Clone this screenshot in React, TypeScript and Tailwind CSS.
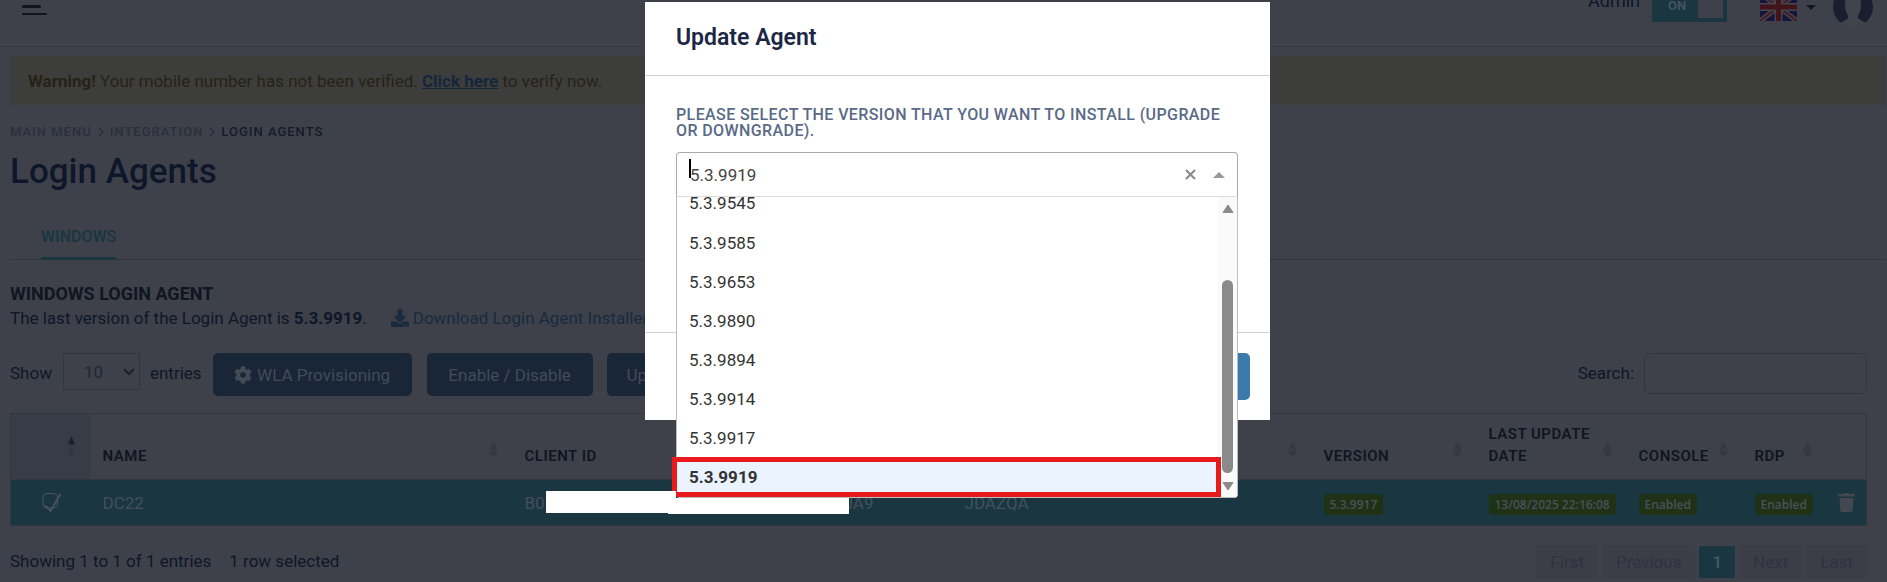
import { useState } from "react";
import { FaCog, FaDownload } from "react-icons/fa";

const versions = ["5.3.9585", "5.3.9653", "5.3.9890", "5.3.9894", "5.3.9914", "5.3.9917"];

const columns = [
  { label: "NAME", width: "w-[422px]" },
  { label: "CLIENT ID", width: "w-[440px]" },
  { label: "", width: "" },
  { label: "VERSION", width: "w-[165px]" },
  { label: "LAST UPDATE DATE", width: "w-[150px]" },
  { label: "CONSOLE", width: "w-[116px]" },
  { label: "RDP", width: "w-[84px]" },
];

const pages = ["First", "Previous", "1", "Next", "Last"];

function SortIcon() {
  return (
    <svg className="shrink-0" width="9" height="16" viewBox="0 0 9 16" fill="#353841">
      <path d="M4.5 0 9 7.500H0zM0 8.500h9L4.500 16z" />
    </svg>
  );
}

function Badge({ children }: { children: string }) {
  return (
    <span className="inline-block h-[21px] rounded bg-[#1f3216] px-[6px] align-middle font-['Open_Sans',sans-serif] text-xs leading-[21px] font-semibold whitespace-nowrap text-[#46515a]">
      {children}
    </span>
  );
}

function Flag() {
  return (
    <svg width="37" height="28" viewBox="0 0 37 28">
      <path fill="#14153a" d="M0 0h37v28H0z" />
      <path stroke="#43464e" strokeWidth="5" d="m0 0 37 28M37 0 0 28" />
      <path stroke="#491a20" strokeWidth="2" d="m0 0 37 28M37 0 0 28" />
      <path stroke="#43464e" strokeWidth="8" d="M18.500 0v28M0 14h37" />
      <path stroke="#42141a" strokeWidth="5" d="M18.500 0v28M0 14h37" />
    </svg>
  );
}

function Avatar() {
  return (
    <svg width="40" height="40" viewBox="0 0 40 40">
      <circle cx="20" cy="20" r="20" fill="#40444d" />
      <path
        fill="#191f30"
        d="M20 0A20 20 0 0 0 7.500 35.600q4-1.600 7-4.100c1-1.500.5-3-.5-5-1.500-3-2-5.500-2-9 0-6 3-9.500 8-9.500s8 3.500 8 9.500c0 3.500-.5 6-2 9-1 2-1.500 3.500-.5 5q3 2.500 7 4.100A20 20 0 0 0 20 0z"
      />
    </svg>
  );
}

function Header() {
  return (
    <header className="-mt-4 flex h-[63px] items-start justify-between border-b border-[#363941] pr-[14px] pl-[22px]">
      <button aria-label="Menu" className="flex flex-col gap-[5px] pt-[21px]">
        <span className="h-[3px] w-[19px] rounded-xs bg-[#10131d]" />
        <span className="h-[2px] w-[25px] rounded-xs bg-[#10131d]" />
      </button>
      <div className="flex items-start">
        <span className="pt-[5px] text-[18px] leading-6">Admin</span>
        <button className="ml-3 flex h-[38px] w-[75px] items-center bg-[#193641] pr-1 pl-4 text-[13px] font-bold text-[#45535c]">
          <span className="pt-[5px]">ON</span>
          <span className="ml-auto h-[30px] w-[25px] bg-[#3e4149]" />
        </button>
        <div className="ml-[33px] flex items-center gap-[9px] pt-[9px]">
          <Flag />
          <svg width="10" height="5" viewBox="0 0 10 5" fill="#0e1629">
            <path d="M0 0h10L5 5z" />
          </svg>
        </div>
        <div className="ml-[17px] pt-[3px]">
          <Avatar />
        </div>
      </div>
    </header>
  );
}

function AgentsTable() {
  return (
    <table className="mt-[17px] w-full table-fixed border-collapse border border-[#33363f] text-left">
      <thead>
        <tr className="h-[66px] border-b border-[#33363f]">
          <th className="w-[79px] bg-[#383c46] pr-[14px]">
            <svg className="ml-auto" width="9" height="22" viewBox="0 0 9 22">
              <path fill="#1b202c" d="M4.500 0 8 8.500H1z" />
              <path fill="#33363f" d="M1 13.500h7L4.500 22z" />
            </svg>
          </th>
          {columns.map((c, i) => (
            <th key={i} className={`pr-[14px] pb-3 pl-[13px] align-bottom ${c.width}`}>
              <div className="flex items-end justify-between text-[15px] leading-[22px] font-semibold tracking-[0.5px] text-[#10151f]">
                <span>{c.label}</span>
                <span className="pb-[9px]">
                  <SortIcon />
                </span>
              </div>
            </th>
          ))}
          <th className="w-[41px]" />
        </tr>
      </thead>
      <tbody>
        <tr className="h-[46px] bg-[#193641] text-[17px] text-[#44505a]">
          <td className="pl-[31px]">
            <svg width="20" height="21" viewBox="0 0 20 21" fill="none" stroke="#4a525b">
              <rect x="1" y="1.500" width="14.500" height="14.500" rx="4" />
              <path strokeWidth="1.800" d="m3 13.500 5.500 5.500L18.500 2" />
            </svg>
          </td>
          <td className="pl-[13px]">DC22</td>
          <td className="pl-[13px]">
            <div className="flex">
              <span>B0</span>
              <span className="ml-[299px]">JA9</span>
            </div>
          </td>
          <td className="pl-[13px]">JDAZQA</td>
          <td className="pl-[13px]"><Badge>5.3.9917</Badge></td>
          <td className="pl-[13px]"><Badge>13/08/2025 22:16:08</Badge></td>
          <td className="pl-[13px]"><Badge>Enabled</Badge></td>
          <td className="pl-[13px]"><Badge>Enabled</Badge></td>
          <td className="pl-[12px]">
            <button aria-label="Delete agent" className="block">
              <svg width="17" height="19" viewBox="0 0 17 19" fill="#43474f">
                <path d="M5.500 1 6.500 0h4l1 1H16q1 0 1 1v1.500H0V2q0-1 1-1zM1.500 5h14l-.8 12.500q-.2 1.500-1.700 1.500H4q-1.500 0-1.700-1.500z" />
              </svg>
            </button>
          </td>
        </tr>
      </tbody>
    </table>
  );
}

function UpdateModal() {
  const [version, setVersion] = useState("5.3.9919");

  return (
    <div role="dialog" aria-label="Update Agent" className="absolute top-[2px] left-[645px] flex h-[418px] w-[625px] flex-col bg-white">
      <h2 className="border-b border-[#cdd1d9] px-[31px] pt-5 pb-[21px] text-[23px] leading-8 font-semibold text-[#1b2743]">
        Update Agent
      </h2>
      <div className="pt-[31px] pr-8 pl-[31px]">
        <label htmlFor="version" className="block text-[16px] leading-4 font-medium tracking-wide text-[#5a6a87]">
          PLEASE SELECT THE VERSION THAT YOU WANT TO INSTALL (UPGRADE OR DOWNGRADE).
        </label>
        <div className="relative mt-[13px] flex h-[45px] items-center rounded-t border border-[#aaa] border-b-[#ddd] pr-3 pl-[13px]">
          <span className="absolute top-[6px] left-3 h-[19px] w-[2px] bg-black" />
          <input
            id="version"
            value={version}
            onChange={(e) => setVersion(e.target.value)}
            className="min-w-0 flex-1 text-[17px] text-[#444] outline-none"
          />
          <button aria-label="Clear" className="mr-[17px]" onClick={() => setVersion("")}>
            <svg width="11" height="11" viewBox="0 0 11 11" stroke="#888" strokeWidth="2">
              <path d="m1 1 9 9M10 1l-9 9" />
            </svg>
          </button>
          <svg width="12" height="6" viewBox="0 0 12 6" fill="#999">
            <path d="M6 0l6 6H0z" />
          </svg>
        </div>
      </div>
      <div className="mt-auto flex justify-end border-t border-[#cdd1d9] px-5 py-5">
        <button aria-label="Update" className="h-[47px] w-[105px] rounded-[5px] bg-[#3a7bac]" />
      </div>

      <div className="absolute top-[195px] left-[31px] flex h-[301px] w-[562px] rounded-b border border-t-0 border-[#bbb] bg-white text-[17px] text-[#333]">
        <ul className="flex min-w-0 flex-1 flex-col">
          <li className="flex h-[26px] items-start overflow-hidden pl-3">
            <span className="-mt-[6px]">5.3.9545</span>
          </li>
          {versions.map((v) => (
            <li key={v} className="flex flex-1 items-center pl-3">{v}</li>
          ))}
          <li className="relative -mt-px -mr-[3px] -ml-[5px] flex h-10 items-center border-5 border-[#e81a1c] bg-[#ebf3ff] pl-3 font-bold">
            5.3.9919
          </li>
        </ul>
        <div className="flex w-[19px] flex-col items-center bg-[#fafafa] pt-[7px] pb-[6px]">
          <svg width="12" height="9" viewBox="0 0 12 9" fill="#8a8a8a"><path stroke="#8a8a8a" strokeLinejoin="round" d="m6 1 5 7.500H1z" /></svg>
          <div className="mt-[67px] mb-[9px] w-[11px] flex-1 rounded-full bg-[#8a8a8a]" />
          <svg width="12" height="9" viewBox="0 0 12 9" fill="#8a8a8a"><path stroke="#8a8a8a" strokeLinejoin="round" d="M1 .5h10L6 8z" /></svg>
        </div>
      </div>
    </div>
  );
}

export default function App() {
  return (
    <div className="relative min-h-screen overflow-hidden bg-[#3e4149] font-[Roboto,sans-serif] text-[17px] leading-6 text-[#0e1629]">
      <Header />
      <main className="pt-[9px] pl-[10px]">
        <div className="mr-px flex h-[49px] items-center bg-[#3d3d3c] pl-[18px] text-[#272216]">
          <p>
            <b>Warning!</b> Your mobile number has not been verified.{" "}
            <a href="#verify" className="font-bold text-[#14263b] underline">Click here</a> to verify now.
          </p>
        </div>

        <nav className="mt-[17px] flex items-center gap-[6px] text-[13px] leading-5 font-medium tracking-[1px] text-[#2b2f3c]">
          <a href="#menu">MAIN MENU</a>
          <svg width="6" height="10" viewBox="0 0 6 10" fill="none" stroke="#2b2f3c" strokeWidth="1.500"><path d="m1 1 4 4-4 4" /></svg>
          <a href="#integration">INTEGRATION</a>
          <svg width="6" height="10" viewBox="0 0 6 10" fill="none" stroke="#2b2f3c" strokeWidth="1.500"><path d="m1 1 4 4-4 4" /></svg>
          <span className="text-[#151a28]">LOGIN AGENTS</span>
        </nav>

        <h1 className="mt-[10px] text-[35px] leading-10 font-medium">Login Agents</h1>

        <div className="mt-[29px] mr-px flex border-b border-[#33363e] pl-[31px]">
          <button className="-mb-px border-b-3 border-[#193641] pt-1 pb-2 text-[16px] font-semibold text-[#193641]">WINDOWS</button>
        </div>

        <div className="pr-5">
          <h3 className="mt-[22px] text-[18px] font-bold text-[#10151f]">WINDOWS LOGIN AGENT</h3>
          <p className="flex items-center">
            <span>The last version of the Login Agent is <b>5.3.9919</b>.</span>
            <a href="#download" className="ml-6 flex items-center gap-1 text-[#182b3f]">
              <FaDownload size={18} /> Download Login Agent Installer
            </a>
          </p>

          <div className="mt-[23px] flex items-start">
            <label htmlFor="entries" className="pt-2">Show</label>
            <div className="relative ml-[11px]">
              <select id="entries" className="h-[37px] w-[77px] appearance-none border border-[#33363f] pl-5 text-[#222733]">
                <option>10</option>
              </select>
              <svg className="absolute top-[15px] right-[5px]" width="12" height="8" viewBox="0 0 12 8" fill="none" stroke="#1b202c" strokeWidth="2">
                <path d="m1 1 5 5 5-5" />
              </svg>
            </div>
            <span className="ml-[10px] pt-2">entries</span>
            <button className="ml-[11px] flex h-[43px] w-[199px] items-center justify-center gap-[5px] rounded-[5px] bg-[#182638] text-[#434b56]">
              <FaCog size={18} /> WLA Provisioning
            </button>
            <button className="ml-[15px] h-[43px] w-[166px] rounded-[5px] bg-[#182638] text-[#434b56]">Enable / Disable</button>
            <button className="ml-[14px] h-[43px] rounded-[5px] bg-[#182638] px-5 text-[#434b56]">Update</button>
            <label htmlFor="search" className="ml-auto pt-2">Search:</label>
            <input id="search" className="ml-[10px] h-[41px] w-[223px] rounded-md border border-[#33363f] px-2" />
          </div>

          <AgentsTable />

          <div className="mt-[19px] flex items-start justify-between">
            <p className="flex gap-[18px] pt-1">
              <span>Showing 1 to 1 of 1 entries</span>
              <span>1 row selected</span>
            </p>
            <div className="flex items-center gap-1">
              {pages.map((p) => (
                <button
                  key={p}
                  className={p === "1" ? "h-8 rounded-xs bg-[#193641] px-[13px] font-medium text-[#4a5660]" : "h-[34px] bg-[#3b3e47] px-[14px] text-[#2f333e]"}
                >
                  {p}
                </button>
              ))}
            </div>
          </div>
        </div>
      </main>

      <UpdateModal />

      {/* blanked out client id */}
      <div className="absolute top-[491px] left-[546px] flex items-start">
        <div className="h-[22px] w-[122px] bg-white" />
        <div className="h-[23px] w-[8px] bg-white" />
        <div className="mt-[7px] h-4 w-[173px] bg-white" />
      </div>
    </div>
  );
}
